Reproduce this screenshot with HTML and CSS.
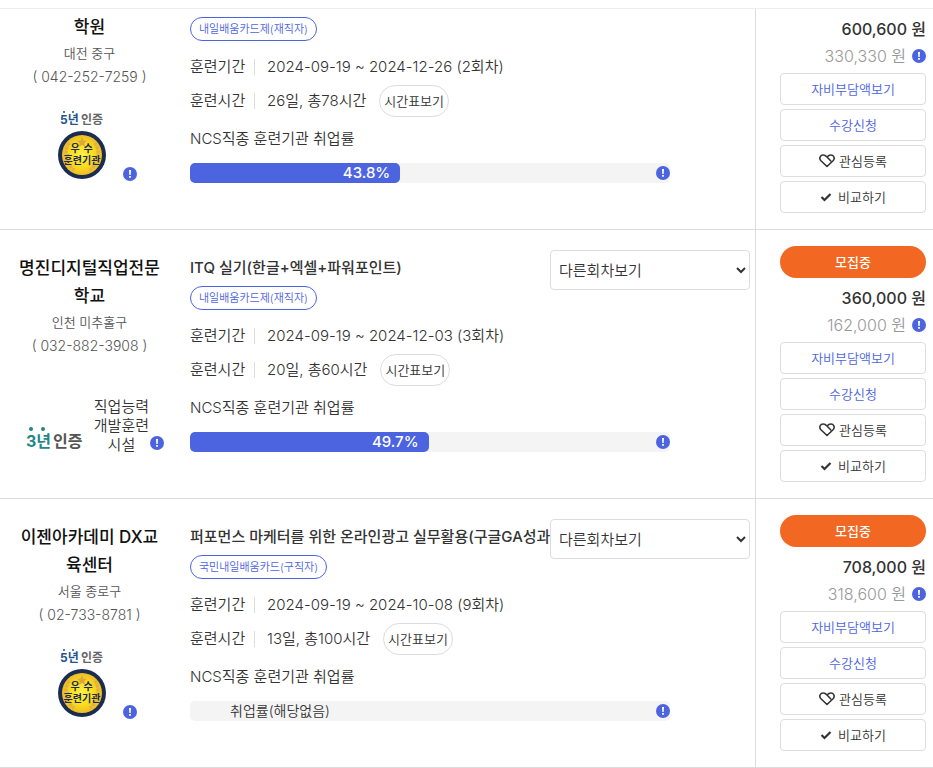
FILE: index.html
```html
<!DOCTYPE html>
<html lang="ko">

<head>
    <meta charset="UTF-8">
    <meta name="viewport" content="width=device-width, initial-scale=1.0">
    <title>훈련과정 검색</title>
    <link rel="stylesheet" href="styles.css">
</head>

<body>
    <!-- shared icons -->
    <svg class="sprite" aria-hidden="true">
        <defs>
            <radialGradient id="gold">
                <stop offset="0" stop-color="#fff04a" />
                <stop offset="0.6" stop-color="#fbdc1c" />
                <stop offset="1" stop-color="#ecbc28" />
            </radialGradient>
        </defs>
        <symbol id="info" viewBox="0 0 14 14">
            <circle cx="7" cy="7" r="7" fill="#4c64e0" />
            <path d="M6 3h2l-.3 5H6.300z M6.100 9h1.800v1.800H6.100z" fill="#fff" />
        </symbol>
        <symbol id="heart" viewBox="0 0 16 14">
            <path d="M8 12.500 2.200 7C-.5 4.200 1.200 1 4.300 1 6 1 7 1.900 8 3l3.600 3.800M8 12.500 13.800 7C16.500 4.200 14.800 1 11.700 1 10 1 9 1.900 8 3" fill="none" stroke="#333" stroke-width="1.600" stroke-linecap="round" stroke-linejoin="round" />
        </symbol>
        <symbol id="check" viewBox="0 0 12 10">
            <path d="M1.500 5 4.500 8 10.500 2" fill="none" stroke="#333" stroke-width="2.200" />
        </symbol>
        <symbol id="medal" viewBox="0 0 48 48">
            <circle cx="24" cy="24" r="24" fill="#1b2c50" />
            <circle cx="24" cy="24" r="20" fill="url(#gold)" />
            <path d="m24 6 1.500 3.500 3.500.3-2.700 2.400.8 3.600-3.100-1.900-3.100 1.900.8-3.600-2.700-2.400 3.500-.3z" fill="#dfa63a" />
            <path d="M11 12c-5 8-4 20 5 27M37 12c5 8 4 20-5 27" fill="none" stroke="#e0b040" stroke-width="3" stroke-dasharray="3 1" />
        </symbol>
    </svg>

    <header class="top"></header>

    <main class="list">
        <article class="course course-first">
            <div class="org">
                <h2>학원</h2>
                <p>대전 중구</p>
                <p class="tel">( 042-252-7259 )</p>
                <div class="cert">
                    <svg class="seal" viewBox="0 0 50 70" role="img" aria-label="5년 인증 우수훈련기관">
                        <circle cx="6" cy="2" r="1" fill="#1d558c" />
                        <circle cx="15" cy="2" r="1" fill="#1d558c" />
                        <text x="2" y="14" class="seal-year">5년</text>
                        <text x="23" y="14" class="seal-cert">인증</text>
                        <use href="#medal" y="21" width="48" height="48" />
                        <text x="17" y="42" class="seal-text">우</text>
                        <text x="30" y="42" class="seal-text">수</text>
                        <text x="24" y="54" class="seal-text">훈련기관</text>
                    </svg>
                    <button class="info" aria-label="인증 안내"><svg><use href="#info" /></svg></button>
                </div>
            </div>
            <div class="detail">
                <div class="head">
                    <div class="subject">
                        <span class="tag">내일배움카드제(재직자)</span>
                    </div>
                </div>
                <dl>
                    <div class="line"><dt>훈련기간</dt><dd>2024-09-19 ~ 2024-12-26 (2회차)</dd></div>
                    <div class="line"><dt>훈련시간</dt><dd>26일, 총78시간</dd><dd><button class="timetable">시간표보기</button></dd></div>
                </dl>
                <p class="rate-title">NCS직종 훈련기관 취업률</p>
                <div class="rate">
                    <div class="fill" style="width: 43.8%">43.8%</div>
                    <button class="info" aria-label="취업률 안내"><svg><use href="#info" /></svg></button>
                </div>
            </div>
            <div class="side">
                <div class="price">
                    <strong>600,600 원</strong>
                    <span>330,330 원 <button class="info" aria-label="훈련비 안내"><svg><use href="#info" /></svg></button></span>
                </div>
                <button class="btn blue">자비부담액보기</button>
                <button class="btn blue">수강신청</button>
                <button class="btn"><svg class="heart"><use href="#heart" /></svg>관심등록</button>
                <button class="btn"><svg class="check"><use href="#check" /></svg>비교하기</button>
            </div>
        </article>

        <article class="course">
            <div class="org">
                <h2>명진디지털직업전문학교</h2>
                <p>인천 미추홀구</p>
                <p class="tel">( 032-882-3908 )</p>
                <div class="cert cert-wide">
                    <svg class="year3" viewBox="0 0 58 26" role="img" aria-label="3년 인증">
                        <circle cx="6" cy="5" r="2" fill="#23868a" />
                        <circle cx="18" cy="5" r="2" fill="#23868a" />
                        <text x="1" y="23" class="year3-num">3년</text>
                        <text x="28" y="23" class="year3-cert">인증</text>
                    </svg>
                    <span>직업능력<br>개발훈련<br>시설</span>
                    <button class="info" aria-label="인증 안내"><svg><use href="#info" /></svg></button>
                </div>
            </div>
            <div class="detail">
                <div class="head">
                    <div class="subject">
                        <h3>ITQ 실기(한글+엑셀+파워포인트)</h3>
                        <span class="tag">내일배움카드제(재직자)</span>
                    </div>
                    <select aria-label="다른회차보기">
                        <option>다른회차보기</option>
                    </select>
                </div>
                <dl>
                    <div class="line"><dt>훈련기간</dt><dd>2024-09-19 ~ 2024-12-03 (3회차)</dd></div>
                    <div class="line"><dt>훈련시간</dt><dd>20일, 총60시간</dd><dd><button class="timetable">시간표보기</button></dd></div>
                </dl>
                <p class="rate-title">NCS직종 훈련기관 취업률</p>
                <div class="rate">
                    <div class="fill" style="width: 49.7%">49.7%</div>
                    <button class="info" aria-label="취업률 안내"><svg><use href="#info" /></svg></button>
                </div>
            </div>
            <div class="side">
                <button class="btn state">모집중</button>
                <div class="price">
                    <strong>360,000 원</strong>
                    <span>162,000 원 <button class="info" aria-label="훈련비 안내"><svg><use href="#info" /></svg></button></span>
                </div>
                <button class="btn blue">자비부담액보기</button>
                <button class="btn blue">수강신청</button>
                <button class="btn"><svg class="heart"><use href="#heart" /></svg>관심등록</button>
                <button class="btn"><svg class="check"><use href="#check" /></svg>비교하기</button>
            </div>
        </article>

        <article class="course">
            <div class="org">
                <h2>이젠아카데미 DX교육센터</h2>
                <p>서울 종로구</p>
                <p class="tel">( 02-733-8781 )</p>
                <div class="cert">
                    <svg class="seal" viewBox="0 0 50 70" role="img" aria-label="5년 인증 우수훈련기관">
                        <circle cx="6" cy="2" r="1" fill="#1d558c" />
                        <circle cx="15" cy="2" r="1" fill="#1d558c" />
                        <text x="2" y="14" class="seal-year">5년</text>
                        <text x="23" y="14" class="seal-cert">인증</text>
                        <use href="#medal" y="21" width="48" height="48" />
                        <text x="17" y="42" class="seal-text">우</text>
                        <text x="30" y="42" class="seal-text">수</text>
                        <text x="24" y="54" class="seal-text">훈련기관</text>
                    </svg>
                    <button class="info" aria-label="인증 안내"><svg><use href="#info" /></svg></button>
                </div>
            </div>
            <div class="detail">
                <div class="head">
                    <div class="subject">
                        <h3>퍼포먼스 마케터를 위한 온라인광고 실무활용(구글GA성과</h3>
                        <span class="tag">국민내일배움카드(구직자)</span>
                    </div>
                    <select aria-label="다른회차보기">
                        <option>다른회차보기</option>
                    </select>
                </div>
                <dl>
                    <div class="line"><dt>훈련기간</dt><dd>2024-09-19 ~ 2024-10-08 (9회차)</dd></div>
                    <div class="line"><dt>훈련시간</dt><dd>13일, 총100시간</dd><dd><button class="timetable">시간표보기</button></dd></div>
                </dl>
                <p class="rate-title">NCS직종 훈련기관 취업률</p>
                <div class="rate">
                    <span class="none">취업률(해당없음)</span>
                    <button class="info" aria-label="취업률 안내"><svg><use href="#info" /></svg></button>
                </div>
            </div>
            <div class="side">
                <button class="btn state">모집중</button>
                <div class="price">
                    <strong>708,000 원</strong>
                    <span>318,600 원 <button class="info" aria-label="훈련비 안내"><svg><use href="#info" /></svg></button></span>
                </div>
                <button class="btn blue">자비부담액보기</button>
                <button class="btn blue">수강신청</button>
                <button class="btn"><svg class="heart"><use href="#heart" /></svg>관심등록</button>
                <button class="btn"><svg class="check"><use href="#check" /></svg>비교하기</button>
            </div>
        </article>
    </main>
</body>

</html>
```

FILE: styles.css
```css
* {
    box-sizing: border-box;
}

body {
    margin: 0;
    background: #fff;
    color: #333;
    font-family: Inter, "Noto Sans CJK KR", sans-serif;
    font-size: 15px;
    font-weight: 350;
    line-height: 24px;
}

h2,
h3,
p,
dl,
dd {
    margin: 0;
}

button,
select {
    font: inherit;
    color: inherit;
}

button {
    cursor: pointer;
}

.sprite {
    position: absolute;
    width: 0;
    height: 0;
}

.top {
    height: 9px;
    border-bottom: 1px solid #eee;
}

.course {
    display: grid;
    grid-template-columns: 180px 1fr 178px;
    border-bottom: 1px solid #ddd;
}

/* 훈련기관 */
.org {
    display: flex;
    flex-direction: column;
    padding: 24px 16px 44px 15px;
    text-align: center;
}

.org h2 {
    color: #111;
    font-size: 17px;
    font-weight: 500;
    line-height: 28px;
    word-break: break-all;
}

.org p {
    color: #555;
    font-size: 13px;
}

.org .tel {
    font-size: 14px;
}

.cert {
    display: flex;
    align-items: flex-end;
    gap: 15px;
    margin-top: auto;
    padding: 0 27px 4px 43px;
}

.cert-wide {
    gap: 1px;
    padding: 0 0 0 10px;
}

.cert-wide span {
    margin-left: auto;
    line-height: 19px;
}

.cert-wide .info {
    margin-bottom: 4px;
}

.seal {
    width: 50px;
    height: 70px;
    margin-bottom: 1px;
}

.year3 {
    width: 58px;
    height: 26px;
    margin-bottom: 4px;
}

.seal-year,
.seal-cert {
    font-size: 12px;
    font-weight: 700;
    fill: #1d558c;
}

.seal-cert {
    fill: #666;
}

.seal-text {
    font-size: 10px;
    font-weight: 700;
    text-anchor: middle;
    fill: #1b2c50;
}

.year3-num,
.year3-cert {
    font-size: 16px;
    font-weight: 700;
    fill: #23868a;
}

.year3-cert {
    fill: #555;
}

.info {
    flex: none;
    width: 14px;
    height: 14px;
    padding: 0;
    border: 0;
    background: none;
}

.info svg {
    display: block;
    width: 14px;
    height: 14px;
}

/* 훈련과정 */
.detail {
    min-width: 0;
    padding: 20px 5px 46px 10px;
}

.head {
    display: flex;
    align-items: flex-start;
}

.subject {
    flex: 1;
    min-width: 0;
    padding-top: 4px;
}

.subject h3 {
    margin-bottom: 4px;
    overflow: hidden;
    font-size: 15px;
    font-weight: 500;
    line-height: 28px;
    white-space: nowrap;
}

.tag {
    display: block;
    width: fit-content;
    padding: 0 8px;
    border: 1px solid #4c64e0;
    border-radius: 12px;
    color: #4c64e0;
    font-size: 11px;
    line-height: 22px;
}

select {
    flex: none;
    width: 200px;
    height: 40px;
    padding: 0 4px;
    border: 1px solid #ddd;
    border-radius: 4px;
    background: #fff;
}

dl {
    display: flex;
    flex-direction: column;
    gap: 6px;
    padding: 14px 0 10px;
}

.line {
    display: flex;
    align-items: center;
}

.line dt {
    position: relative;
    width: 77px;
}

.line dt::after {
    content: "";
    position: absolute;
    top: 4px;
    left: 64px;
    height: 16px;
    border-left: 1px solid #ddd;
}

.timetable {
    display: block;
    height: 32px;
    margin-left: 13px;
    padding: 0 4px;
    border: 1px solid #ddd;
    border-radius: 16px;
    background: #fff;
    font-size: 13px;
}

.rate-title {
    margin-bottom: 12px;
}

.rate {
    display: flex;
    align-items: center;
    justify-content: space-between;
    max-width: 480px;
    height: 20px;
    border-radius: 5px;
    background: #f4f4f4;
    line-height: 20px;
}

.fill {
    padding-right: 10px;
    border-radius: 5px;
    background: #4c64e0;
    color: #fff;
    font-weight: 500;
    text-align: right;
}

.none {
    padding-left: 40px;
    font-size: 14px;
}

/* 수강료, 버튼 */
.side {
    display: flex;
    flex-direction: column;
    gap: 4px;
    padding: 16px 7px 16px 24px;
    border-left: 1px solid #ddd;
}

.price {
    display: flex;
    flex-direction: column;
    gap: 1px;
    padding-top: 3px;
    font-size: 16px;
    line-height: 26px;
    text-align: right;
}

.price strong {
    font-weight: 500;
}

.price span {
    display: flex;
    align-items: center;
    justify-content: flex-end;
    gap: 6px;
    color: #999;
}

.btn {
    display: flex;
    align-items: center;
    justify-content: center;
    gap: 4px;
    height: 32px;
    padding: 0;
    border: 1px solid #ddd;
    border-radius: 4px;
    background: #fff;
    font-size: 13px;
}

.blue {
    color: #4c64e0;
}

.state {
    border: 0;
    border-radius: 16px;
    background: #f26722;
    color: #fff;
    font-weight: 500;
}

.heart {
    width: 16px;
    height: 14px;
}

.check {
    width: 12px;
    height: 10px;
    margin-right: 2px;
}

/* first row starts below the top line */
.course-first .org {
    padding-top: 4px;
}

.course-first .detail {
    padding-top: 8px;
}

.course-first .side {
    padding-top: 7px;
}

.course-first .subject,
.course-first .price {
    padding-top: 0;
}
```
